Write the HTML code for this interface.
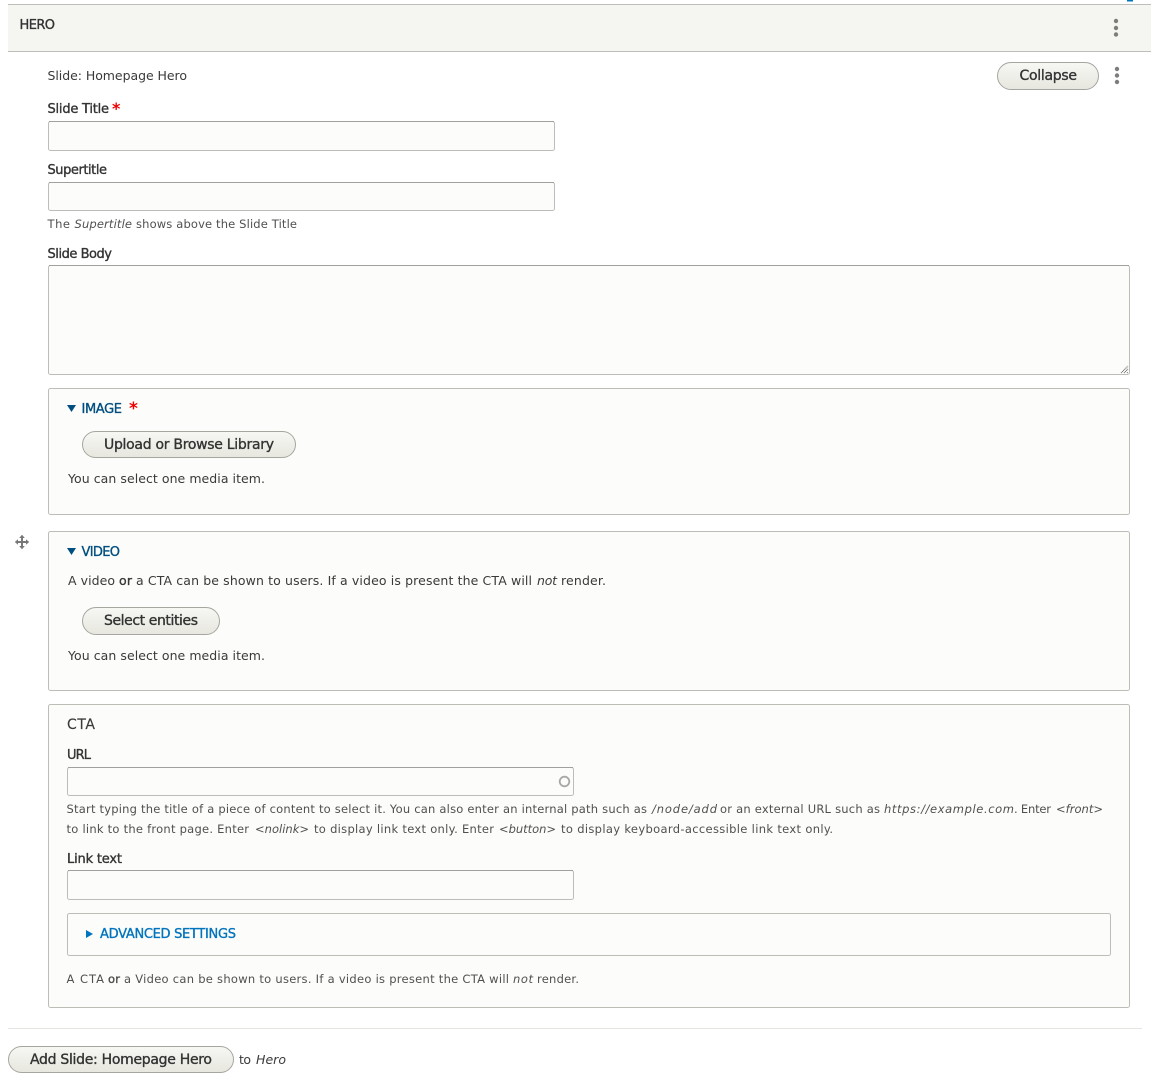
<!DOCTYPE html>
<html><head><meta charset="utf-8"><style>
html,body{margin:0;padding:0;background:#fff;width:1151px;height:1082px;overflow:hidden}
svg{display:block}
text{font-family:"DejaVu Sans","Liberation Sans",sans-serif;white-space:pre}
.n{font-size:12.5px;fill:#3a3a3a}
.s{font-size:11.5px;fill:#505050}
.i{font-style:italic}
.l{font-size:13px;fill:#333;stroke:#333;stroke-width:.35}
.b{font-size:14px;fill:#333;stroke:#333;stroke-width:.35;text-anchor:start}
.f{fill:#fcfcfa;stroke:#bdbdb8}
.in{fill:#fcfcfa;stroke:#bcbcb8}
.it{fill:none;stroke:#a0a09c}
.btn{fill:url(#g);stroke:#a6a6a0}
.d{fill:#7d7d7d}
</style></head><body>
<svg width="1151" height="1082" viewBox="0 0 1151 1082" xmlns="http://www.w3.org/2000/svg">
<defs><linearGradient id="g" x1="0" y1="0" x2="0" y2="1"><stop offset="0" stop-color="#f7f7f4"/><stop offset="1" stop-color="#e7e7df"/></linearGradient></defs>
<rect x="1127" y="0" width="6" height="1.5" fill="#0074bd"/>
<rect x="8" y="4.5" width="1143" height="47" fill="#f5f5f2"/>
<path d="M8 4.5H1151M8 51.5H1151" stroke="#bfbfba" fill="none"/>
<text x="19.500" y="29" class="l" textLength="35.500">HERO</text>
<circle class="d" cx="1116" cy="21" r="2.2"/><circle class="d" cx="1116" cy="28" r="2.2"/><circle class="d" cx="1116" cy="34.500" r="2.2"/>

<text x="47.500" y="80" class="n" textLength="139.500">Slide: Homepage Hero</text>
<rect class="btn" x="997.500" y="62.500" width="101" height="27" rx="13.500"/>
<text x="1019.500" y="80" class="b" textLength="57.500">Collapse</text>
<circle class="d" cx="1117" cy="69" r="2.2"/><circle class="d" cx="1117" cy="75.500" r="2.2"/><circle class="d" cx="1117" cy="82" r="2.2"/>

<text x="47.500" y="113" class="l" textLength="61.500">Slide Title</text>
<text x="112" y="114" font-size="16" font-weight="bold" fill="#e00" textLength="8">*</text>
<rect class="in" x="48.500" y="121.500" width="506" height="29" rx="2"/>
<path class="it" d="M49 121.500H554"/>

<text x="47.500" y="174" class="l" textLength="59.500">Supertitle</text>
<rect class="in" x="48.500" y="182.500" width="506" height="28" rx="2"/>
<path class="it" d="M49 182.500H554"/>
<text x="47.500" y="228" class="s" textLength="22.500">The</text>
<text x="74.500" y="228" class="s i" textLength="57.500">Supertitle</text>
<text x="136" y="228" class="s" textLength="161">shows above the Slide Title</text>

<text x="47.500" y="258" class="l" textLength="64.500">Slide Body</text>
<rect class="in" x="48.500" y="265.500" width="1081" height="109" rx="2"/>
<path class="it" d="M49 265.500H1129"/>
<path d="M1121 373L1128 366M1124 373L1128 369M1127 373L1128 372" stroke="#666" stroke-width="1" stroke-dasharray="1 .6" fill="none"/>

<rect class="f" x="48.500" y="388.500" width="1081" height="126" rx="2"/>
<path d="M67 405H76L71.500 412Z" fill="#004f80"/>
<text x="81.500" y="413" class="l" style="fill:#004f80;stroke:#004f80" textLength="40.500">IMAGE</text>
<text x="129" y="414" font-size="17" font-weight="bold" fill="#e00" textLength="9">*</text>
<rect class="btn" x="82.500" y="431.500" width="213" height="26" rx="13"/>
<text x="104" y="449" class="b" textLength="170">Upload or Browse Library</text>
<text x="68" y="483" class="n" textLength="197">You can select one media item.</text>

<g fill="#787878" stroke="#787878"><path d="M22 536.500V547.500M16.500 542H27.500" stroke-width="2" fill="none"/><path d="M22 534.800L24.800 538H19.200ZM22 549.200L24.800 546H19.200ZM14.800 542L18 539.200V544.800ZM29.200 542L26 539.200V544.800Z" stroke="none"/></g>

<rect class="f" x="48.500" y="531.500" width="1081" height="159" rx="2"/>
<path d="M67 548H76L71.500 555Z" fill="#004f80"/>
<text x="81.500" y="556" class="l" style="fill:#004f80;stroke:#004f80" textLength="38.500">VIDEO</text>
<text x="68" y="585" class="n" textLength="47">A video</text>
<text x="119" y="585" class="n" style="stroke:#333;stroke-width:.35" textLength="13">or</text>
<text x="136" y="585" class="n" textLength="396">a CTA can be shown to users. If a video is present the CTA will</text>
<text x="537" y="585" class="n i" textLength="20">not</text>
<text x="561" y="585" class="n" textLength="45">render.</text>
<rect class="btn" x="82.500" y="607.500" width="137" height="27" rx="13.500"/>
<text x="104" y="625" class="b" textLength="94">Select entities</text>
<text x="68" y="660" class="n" textLength="197">You can select one media item.</text>

<rect class="f" x="48.500" y="704.500" width="1081" height="303" rx="2"/>
<text x="67" y="729" class="n" style="font-size:14px;stroke:#3a3a3a;stroke-width:.15" textLength="28">CTA</text>
<text x="67" y="759" class="l" textLength="24">URL</text>
<rect class="in" x="67.500" y="767.500" width="506" height="28" rx="2"/>
<path class="it" d="M68 767.500H573"/>
<circle cx="564.500" cy="781.500" r="4.800" fill="none" stroke="#a8a8a4" stroke-width="1.800"/>

<text x="66.500" y="813" class="s" textLength="580.500">Start typing the title of a piece of content to select it. You can also enter an internal path such as</text>
<text x="652" y="813" class="s i" textLength="65">/node/add</text>
<text x="720" y="813" class="s" textLength="160">or an external URL such as</text>
<text x="884" y="813" class="s i" textLength="130">https://example.com</text>
<text x="1014" y="813" class="s" textLength="37">. Enter</text>
<text x="1056" y="813" class="s i" textLength="47">&lt;front&gt;</text>
<text x="66.500" y="833" class="s" textLength="182.500">to link to the front page. Enter</text>
<text x="255" y="833" class="s i" textLength="54">&lt;nolink&gt;</text>
<text x="314" y="833" class="s" textLength="180">to display link text only. Enter</text>
<text x="499" y="833" class="s i" textLength="57">&lt;button&gt;</text>
<text x="561" y="833" class="s" textLength="272">to display keyboard-accessible link text only.</text>

<text x="67" y="863" class="l" textLength="55">Link text</text>
<rect class="in" x="67.500" y="870.500" width="506" height="29" rx="2"/>
<path class="it" d="M68 870.500H573"/>

<rect class="f" x="67.500" y="913.500" width="1043" height="42" rx="2"/>
<path d="M86 930L93 934L86 938Z" fill="#0074bd"/>
<text x="100" y="938" class="l" style="fill:#0074bd;stroke:#0074bd" textLength="136">ADVANCED SETTINGS</text>

<text x="66.500" y="983" class="s" textLength="37.500">A CTA</text>
<text x="108" y="983" class="s" style="stroke:#444;stroke-width:.35" textLength="12">or</text>
<text x="124" y="983" class="s" textLength="385">a Video can be shown to users. If a video is present the CTA will</text>
<text x="513" y="983" class="s i" textLength="20">not</text>
<text x="537" y="983" class="s" textLength="42">render.</text>

<path d="M8 1028.500H1142" stroke="#e6e4df" fill="none"/>
<rect class="btn" x="8.500" y="1046.500" width="225" height="26" rx="13"/>
<text x="30" y="1064" class="b" textLength="182">Add Slide: Homepage Hero</text>
<text x="239" y="1064" class="n" textLength="12">to</text>
<text x="256" y="1064" class="n i" textLength="30">Hero</text>
</svg>
</body></html>
